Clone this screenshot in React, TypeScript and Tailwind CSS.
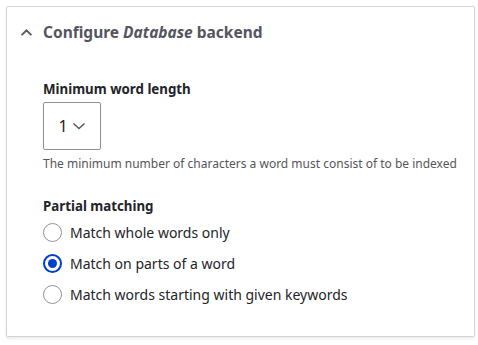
import { useState } from 'react'

const options = [
  { id: 'whole', label: 'Match whole words only' },
  { id: 'parts', label: 'Match on parts of a word' },
  { id: 'prefix', label: 'Match words starting with given keywords' },
]

export default function App() {
  const [matching, setMatching] = useState('parts')

  return (
    <div className="w-[478px] h-[345px] bg-white pt-[6px] pl-[6px] pr-[3px] font-['Noto_Sans','Open_Sans',sans-serif]">
      <div className="h-[331px] border border-[#d3d4d9] rounded-[2px] shadow-[0_2px_3px_rgba(0,0,0,0.08)] bg-white">
        <div className="flex items-center h-[50px] pl-[13px] pt-[1px]">
          <svg className="w-[13px] h-[13px] text-[#545560]" viewBox="0 0 12 12" fill="none" stroke="currentColor" strokeWidth={1.7}>
            <path d="M1.5 8.5L6 4l4.5 4.5" />
          </svg>
          <h2 className="ml-[10px] text-[15.5px] font-bold text-[#545560]">
            Configure <em className="italic">Database</em> backend
          </h2>
        </div>

        <div className="pl-[36px] pt-[22px]">
          <p className="text-[13.3px] font-bold text-[#232429] leading-[20px]">Minimum word length</p>
          <div className="mt-[3px] w-[58px] h-[48px] border border-[#8e929c] rounded-[2px] flex items-center justify-center gap-[4px]">
            <span className="text-[16px] text-[#232429]">1</span>
            <svg className="w-[14px] h-[10px] text-[#545560]" viewBox="0 0 14 10" fill="none" stroke="currentColor" strokeWidth={1.4}>
              <path d="M1.5 2.5L7 7.5l5.5-5" />
            </svg>
          </div>
          <p className="mt-[5px] text-[12px] text-[#55565b] leading-[18px]">
            The minimum number of characters a word must consist of to be indexed
          </p>

          <p className="mt-[23px] text-[13.3px] font-bold text-[#232429] leading-[20px]">Partial matching</p>
          <div className="mt-[6px] flex flex-col gap-[11px]">
            {options.map(o => (
              <label key={o.id} className="flex items-center gap-[8px] h-[20px] cursor-pointer">
                <input
                  type="radio"
                  name="matching"
                  checked={matching === o.id}
                  onChange={() => setMatching(o.id)}
                  className="sr-only"
                />
                {matching === o.id ? (
                  <span className="w-[19px] h-[19px] rounded-full border-[2px] border-[#003ecc] flex items-center justify-center">
                    <span className="w-[9px] h-[9px] rounded-full bg-[#003ecc]" />
                  </span>
                ) : (
                  <span className="w-[19px] h-[19px] rounded-full border border-[#8e929c]" />
                )}
                <span className="text-[14px] text-[#232429]">{o.label}</span>
              </label>
            ))}
          </div>
        </div>
      </div>
    </div>
  )
}
